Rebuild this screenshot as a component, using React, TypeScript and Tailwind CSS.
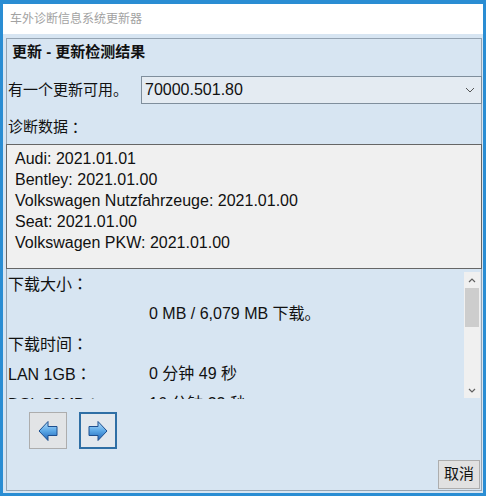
const FONT = "font-['Liberation_Sans','Noto_Sans_CJK_SC',sans-serif]"

const Colon = () => <span className="font-['Noto_Sans_CJK_TC',sans-serif]">：</span>

const Arrow = ({ dir }: { dir: 'left' | 'right' }) => {
  const pts =
    dir === 'left'
      ? '1,11 10,1.5 10,6.5 19,6.5 19,15.5 10,15.5 10,20.5'
      : '19,11 10,1.5 10,6.5 1,6.5 1,15.5 10,15.5 10,20.5'
  return (
    <svg width="20" height="22" viewBox="0 0 20 22">
      <defs>
        <linearGradient id={`g-${dir}`} x1="0" y1="0" x2="0" y2="1">
          <stop offset="0" stopColor="#b9e0fb" />
          <stop offset="0.5" stopColor="#5aa7e6" />
          <stop offset="1" stopColor="#1f62b4" />
        </linearGradient>
      </defs>
      <polygon points={pts} fill={`url(#g-${dir})`} stroke="#1d4f8f" strokeWidth="1" strokeLinejoin="round" />
    </svg>
  )
}

const dataLines = [
  'Audi: 2021.01.01',
  'Bentley: 2021.01.00',
  'Volkswagen Nutzfahrzeuge: 2021.01.00',
  'Seat: 2021.01.00',
  'Volkswagen PKW: 2021.01.00',
]

const rows: [string, string][] = [
  ['下载大小', ''],
  ['', '0 MB / 6,079 MB 下载。'],
  ['下载时间', ''],
  ['LAN 1GB', '0 分钟 49 秒'],
  ['DSL 50MB', '16 分钟 33 秒'],
]

const App = () => {
  return (
    <div className={`${FONT} w-[486px] h-[496px] flex flex-col bg-[#d7e5f2] border-x-[3px] border-t-4 border-b-[3px] border-[#2a8dd3] text-[#111]`}>
      <div className="h-[30px] shrink-0 bg-white flex items-center pl-[7px] text-[12px] text-[#a2a2a2]">
        车外诊断信息系统更新器
      </div>

      <div className="flex-1 mt-[4px] ml-[3px] mr-[1px] mb-[2px] border border-[#95a4b3] flex flex-col">
        <div className="h-[27px] flex items-center pl-[5px] text-[15px] font-bold">更新 - 更新检测结果</div>

        <div className="mt-[10px] flex items-center">
          <div className="w-[134px] pl-[1px] text-[15px]">有一个更新可用。</div>
          <div className="flex-1 h-[28px] -mr-px bg-[#e4ebf2] border border-[#7f8e9c] flex items-center pl-[3px] pr-[6px]">
            <span className="flex-1 text-[16px]">70000.501.80</span>
            <svg width="10" height="6" viewBox="0 0 10 6">
              <path d="M1 1 L5 5 L9 1" fill="none" stroke="#555" strokeWidth="1" />
            </svg>
          </div>
        </div>

        <div className="h-[40px] pt-[6px] flex items-center pl-[1px] text-[15px]">
          诊断数据<Colon />
        </div>

        <div className="h-[125px] -mx-px bg-[#f0f0f0] border border-[#666] pl-[8px] pt-[3px] text-[16px] leading-[21px]">
          {dataLines.map(l => (
            <div key={l}>{l}</div>
          ))}
        </div>

        <div className="h-[130px] flex overflow-hidden">
          <div className="flex-1">
            {rows.map(([a, b], i) => (
              <div key={i} className="h-[30px] flex items-center">
                <div className="w-[142px] pl-[1px] text-[16px]">
                  {a}
                  {a && <Colon />}
                </div>
                <div className="text-[16px]">{b}</div>
              </div>
            ))}
          </div>
          <div className="w-[16px] mt-[3px] mb-[1px] mr-[1px] bg-[#f0f0f0] flex flex-col">
            <div className="h-[16px] flex items-center justify-center">
              <svg width="8" height="5" viewBox="0 0 8 5">
                <path d="M1 4 L4 1 L7 4" fill="none" stroke="#606060" strokeWidth="1.2" />
              </svg>
            </div>
            <div className="h-[39px] mx-[1px] bg-[#cdcdcd]" />
            <div className="flex-1" />
            <div className="h-[16px] flex items-center justify-center">
              <svg width="8" height="5" viewBox="0 0 8 5">
                <path d="M1 1 L4 4 L7 1" fill="none" stroke="#606060" strokeWidth="1.2" />
              </svg>
            </div>
          </div>
        </div>

        <div className="mt-[13px] ml-[22px] flex gap-[12px]">
          <div className="w-[38px] h-[37px] bg-[#e2e4e6] border border-[#adadad] flex items-center justify-center">
            <Arrow dir="left" />
          </div>
          <div className="w-[38px] h-[37px] bg-[#e2e8ee] border-2 border-[#2f6fa5] flex items-center justify-center">
            <Arrow dir="right" />
          </div>
        </div>

        <div className="mt-auto mb-px mr-px flex justify-end">
          <div className="w-[42px] h-[29px] bg-[#e1e1e1] border border-[#adadad] flex items-center justify-center text-[15px]">
            取消
          </div>
        </div>
      </div>
    </div>
  )
}

export default App
